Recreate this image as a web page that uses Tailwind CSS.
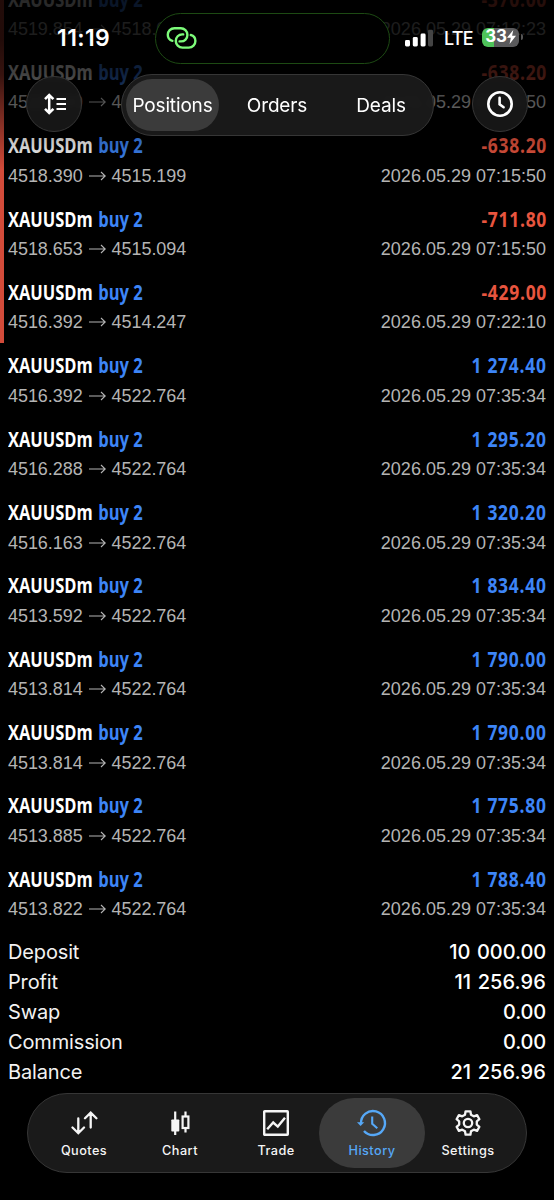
<!DOCTYPE html>
<html lang="en">
<head>
<meta charset="utf-8">
<title>History</title>
<script src="https://cdn.jsdelivr.net/npm/@tailwindcss/browser@4"></script>
</head>
<body class="bg-black">
<div class="relative h-[1200px] w-[554px] overflow-hidden bg-black font-['Inter',sans-serif] text-white">

  <!-- Position list -->
  <main class="relative -mt-[16.4px]">
    <div class="absolute top-0 left-0 h-[359.4px] w-1 bg-[#d24b3a]"></div>
    <div id="rows"></div>
    <dl class="px-2 text-[20px] leading-[30px] tracking-[-0.15px]">
      <div class="flex justify-between"><dt class="text-[#f2f2f2]">Deposit</dt><dd class="font-medium tracking-[-0.1px] [word-spacing:1.5px]">10 000.00</dd></div>
      <div class="flex justify-between"><dt class="text-[#f2f2f2]">Profit</dt><dd class="font-medium tracking-[0.1px] [word-spacing:1px]">11 256.96</dd></div>
      <div class="flex justify-between"><dt class="text-[#f2f2f2]">Swap</dt><dd class="font-medium tracking-[-0.2px]">0.00</dd></div>
      <div class="flex justify-between"><dt class="text-[#f2f2f2]">Commission</dt><dd class="font-medium tracking-[-0.2px]">0.00</dd></div>
      <div class="flex justify-between"><dt class="text-[#f2f2f2]">Balance</dt><dd class="font-medium tracking-[0.1px] [word-spacing:1px]">21 256.96</dd></div>
    </dl>
  </main>

  <!-- Scroll-edge fade and header -->
  <header class="absolute inset-x-0 top-0 h-[180px] bg-[linear-gradient(to_bottom,rgba(0,0,0,.84)_0,rgba(0,0,0,.84)_40px,rgba(0,0,0,.74)_75px,rgba(0,0,0,.5)_106px,rgba(0,0,0,.2)_145px,rgba(0,0,0,0)_170px)]">
    <div class="flex h-[74px] items-center pt-[2px] pl-[57px]">
      <span class="w-[98px] text-[23px] font-semibold tracking-[0.4px]">11:19</span>
      <div class="flex h-[51px] w-[235px] shrink-0 items-center rounded-full border-[1.5px] border-[#1d4a13] bg-black pl-[10px]">
        <svg class="h-[26px] w-[32px]" viewBox="0 0 32 26" fill="none" stroke="#7dfb7a" stroke-width="2.4" stroke-linecap="round">
          <path d="M6.4 15.8 C3.8 15.2 1.8 12.8 1.8 9.8 C1.8 6.2 4.6 3.2 8.4 3.2 H14.8 C18.4 3.2 21.4 6.2 21.4 9.9 C21.4 13.6 18.6 16.4 15 16.4 H13.6"/>
          <path d="M24.8 10 C27.4 10.6 29.4 13 29.4 16 C29.4 19.6 26.6 22.6 22.8 22.6 H16.4 C12.8 22.6 9.8 19.6 9.8 15.9 C9.8 12.2 12.6 9.4 16.2 9.4 H17.2"/>
        </svg>
      </div>
      <svg class="ml-[14px] h-[18px] w-[29px] shrink-0" viewBox="0 0 29 18" fill="#fff">
        <rect x="1" y="11" width="5" height="6.5" rx="1.4"/><rect x="8.8" y="8" width="5" height="9.5" rx="1.4"/><rect x="16.6" y="4.5" width="5" height="13" rx="1.4"/><rect x="24" y="0.7" width="5" height="16.8" rx="1.4" fill="#444"/>
      </svg>
      <span class="ml-[11px] w-[29px] text-[18px] font-medium tracking-[-0.8px]">LTE</span>
      <div class="ml-[9px] flex items-center gap-[2px]">
        <div class="-mt-[2px] flex h-[19px] w-[37px] items-center justify-center rounded-[6px] bg-[linear-gradient(to_right,#4fc35a_0,#4fc35a_12.5px,#5a5a5c_12.5px)]">
          <span class="text-[17px] font-bold tracking-[-0.1px]">33</span>
          <svg class="h-[14px] w-[9px]" viewBox="0 0 9 14" fill="#fff"><path d="M6.3 0 L0 7.8 H3.8 L2.6 14 L9 5.8 H5.1 Z"/></svg>
        </div>
        <div class="-mt-[2px] h-[6px] w-[2px] rounded-r-full bg-[#555]"></div>
      </div>
    </div>
    <div class="flex h-[62px] items-center pl-[26px]">
      <button class="-mt-[2px] flex size-[56px] items-center justify-center rounded-full border border-[#363636] bg-[#181818]/90 backdrop-blur-[3px]">
        <svg class="ml-[2px] h-[22px] w-[24px]" viewBox="0 0 24 22" fill="none" stroke="#fff" stroke-width="2.5">
          <path d="M6.2 2.5 V19.5 M2 6.2 L6.2 2 L10.4 6.2 M2 15.8 L6.2 20 L10.4 15.8"/><path d="M13.5 6 H23 M13.5 11 H23 M13.5 16 H23" stroke-width="2.2"/>
        </svg>
      </button>
      <nav class="ml-[39px] flex h-[62px] w-[313px] items-center rounded-full border border-[#363636] bg-[#1a1a1a]/95 pl-1 text-[19px] leading-[28px] tracking-[-0.15px] backdrop-blur-[3px]">
        <a class="flex h-[52px] w-[93px] items-center justify-center rounded-full bg-[#3b3b3b] pt-[2px]">Positions</a>
        <a class="w-[116px] pt-[2px] text-center">Orders</a>
        <a class="w-[92px] pt-[2px] text-center">Deals</a>
      </nav>
      <button class="-mt-[2px] ml-[38px] flex size-[56px] items-center justify-center rounded-full border border-[#363636] bg-[#181818]/90 backdrop-blur-[3px]">
        <svg class="size-[28px]" viewBox="0 0 28 28" fill="none" stroke="#fff" stroke-width="2.6" stroke-linecap="round"><circle cx="14" cy="14" r="11.7"/><path d="M13.6 7.8 V14.4 L17.6 17.2"/></svg>
      </button>
    </div>
  </header>

  <!-- Tab bar -->
  <nav class="absolute top-[1093px] left-[27px] flex h-[80px] w-[500px] items-center rounded-full border border-[#363636] bg-[#1a1a1a] pl-2 text-[12.7px] font-medium tracking-[0.45px] text-[#f5f5f5]">
    <a class="flex w-24 flex-col items-center gap-[5px] pt-[3px]">
      <svg class="size-[28px]" viewBox="0 0 28 28" fill="none" stroke="currentColor" stroke-width="2.3" stroke-linecap="round"><path d="M8.3 9.5 V23.5 M2.5 18.5 L8.3 24.2 L14 18.5 M20.7 18.5 V4.5 M15 9.3 L20.7 3.7 L26.4 9.3"/></svg>
      <span class="leading-[18px]">Quotes</span>
    </a>
    <a class="flex w-24 flex-col items-center gap-[5px] pt-[3px]">
      <svg class="size-[28px]" viewBox="0 0 28 28" fill="none" stroke="currentColor" stroke-width="2.2"><path d="M9.2 2.5 V26"/><rect x="5.3" y="10.5" width="8" height="12" rx="0.8" fill="currentColor" stroke="none"/><path d="M19.5 2.5 V7 M19.5 19.5 V23.5"/><rect x="16.6" y="7.5" width="5.8" height="11.5"/></svg>
      <span class="leading-[18px]">Chart</span>
    </a>
    <a class="flex w-24 flex-col items-center gap-[5px] pt-[3px]">
      <svg class="size-[28px]" viewBox="0 0 28 28" fill="none" stroke="currentColor" stroke-width="2.4" stroke-linejoin="round"><rect x="2.2" y="2.2" width="23.6" height="23.6" rx="0.5"/><path d="M5.2 20.2 L11.2 13.5 L15.8 17.6 L23 8.8" stroke-linejoin="miter"/></svg>
      <span class="leading-[18px]">Trade</span>
    </a>
    <a class="flex h-[70px] w-24 justify-center text-[#56a8f7]">
      <span class="flex h-[70px] w-[106px] shrink-0 flex-col items-center justify-center gap-[5px] rounded-full bg-[#3b3b3b] pt-[3px]">
        <svg class="size-[28px] overflow-visible" viewBox="0 0 28 28" fill="none" stroke="currentColor" stroke-width="2.4"><path d="M3 14.5 A12 12 0 1 1 6 22"/><path d="M-1 13.2 H6.2 L2.6 17 Z" fill="currentColor" stroke="none"/><path d="M14.2 7.5 V14.8 L19.3 19.3" stroke-width="2.1"/></svg>
        <span class="leading-[18px]">History</span>
      </span>
    </a>
    <a class="flex w-24 flex-col items-center gap-[5px] pt-[3px]">
      <svg class="size-[28px]" viewBox="0 0 28 28" fill="none" stroke="currentColor" stroke-width="2.3" stroke-linejoin="round"><path d="M11.6 2.3 H16.4 L17 5.7 L19.8 7.3 L23.1 6.1 L25.4 10.2 L22.8 12.4 V15.6 L25.4 17.8 L23.1 21.9 L19.8 20.7 L17 22.3 L16.4 25.7 H11.6 L11 22.3 L8.2 20.7 L4.9 21.9 L2.6 17.8 L5.2 15.6 V12.4 L2.6 10.2 L4.9 6.1 L8.2 7.3 L11 5.7 Z"/><circle cx="14" cy="14" r="4.2"/></svg>
      <span class="leading-[18px]">Settings</span>
    </a>
  </nav>
</div>

<script>
const deals = [
  ["4519.854", "4518.023", "-370.00", "07:12:23"],
  ["4518.390", "4515.199", "-638.20", "07:15:50"],
  ["4518.390", "4515.199", "-638.20", "07:15:50"],
  ["4518.653", "4515.094", "-711.80", "07:15:50"],
  ["4516.392", "4514.247", "-429.00", "07:22:10"],
  ["4516.392", "4522.764", "1 274.40", "07:35:34"],
  ["4516.288", "4522.764", "1 295.20", "07:35:34"],
  ["4516.163", "4522.764", "1 320.20", "07:35:34"],
  ["4513.592", "4522.764", "1 834.40", "07:35:34"],
  ["4513.814", "4522.764", "1 790.00", "07:35:34"],
  ["4513.814", "4522.764", "1 790.00", "07:35:34"],
  ["4513.885", "4522.764", "1 775.80", "07:35:34"],
  ["4513.822", "4522.764", "1 788.40", "07:35:34"],
];
document.getElementById("rows").innerHTML = deals.map(([open, close, profit, time]) => `
  <section class="h-[73.35px] px-2 whitespace-nowrap">
    <div class="flex h-[30px] items-center justify-between font-['Open_Sans',sans-serif] text-[21px] leading-[30px] font-bold">
      <div class="flex origin-left scale-x-[.785] gap-[7px]"><span>XAUUSDm</span><span class="text-[#3d85f7]">buy 2</span></div>
      <div class="-mr-[0.8px] origin-right scale-x-[.83] tracking-[0.9px] ${profit[0] === "-" ? "text-[#e8553f]" : "text-[#3d85f7]"}">${profit}</div>
    </div>
    <div class="flex h-[30px] items-center justify-between pt-px font-['Liberation_Sans',sans-serif] text-[18px] leading-[30px] text-[#b4b4b4]">
      <div class="flex items-center gap-[6px] tracking-[-0.06px]"><span>${open}</span><svg class="h-[10px] w-[17px]" viewBox="0 0 17 10" fill="none" stroke="currentColor" stroke-width="1.1"><path d="M0 5 H16 M12 1 L16.2 5 L12 9"/></svg><span>${close}</span></div>
      <div>2026.05.29 ${time}</div>
    </div>
  </section>`).join("");
</script>
</body>
</html>
